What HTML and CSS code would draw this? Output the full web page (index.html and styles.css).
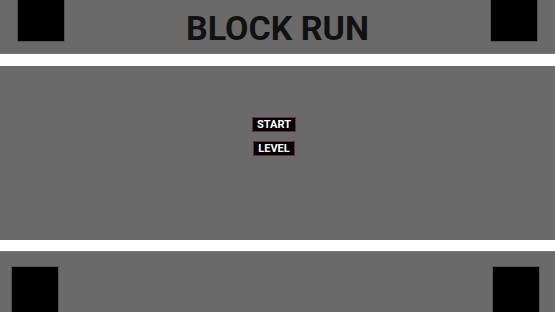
FILE: index.html
```html
<!DOCTYPE html>
<html lang="en">
<head>
    <meta charset="UTF-8">
    <meta name="viewport" content="width=device-width, initial-scale=1.0">
    <title>Block Run</title>
    <link rel="stylesheet" href="styles.css">
</head>
<body>
    <div class="top">
        <div class="block"></div>
        <h1 class="title">BLOCK RUN</h1>
        <div class="block"></div>
    </div>
    <div class="band"></div>
    <div class="middle">
        <button type="button" class="menu-btn">START</button>
        <button type="button" class="menu-btn">LEVEL</button>
    </div>
    <div class="band band-low"></div>
    <div class="bottom">
        <div class="block block-low"></div>
        <div class="block block-low"></div>
    </div>
</body>
</html>
```

FILE: styles.css
```css
body {
    margin: 0;
    height: 312px;
    overflow: hidden;
    background: #6a6a6a;
    font-family: Roboto, "Liberation Sans", sans-serif;
}
.top {
    height: 53px;
    display: flex;
    align-items: flex-start;
    padding: 0 18px;
}
.block {
    width: 46px;
    height: 41px;
    background: #000;
    box-shadow: 0 0 0 1px #555;
}
.title {
    flex: 1;
    margin: 11px 0 0;
    text-align: center;
    font-size: 34px;
    line-height: 34px;
    font-weight: bold;
    color: #111;
}
.band {
    height: 13px;
    background: #fff;
    border-top: 1px solid #7a7a7a;
    box-sizing: border-box;
}
.band-low {
    height: 12px;
    border-top: none;
    border-bottom: 1px solid #7a7a7a;
}
.middle {
    height: 174px;
    display: flex;
    flex-direction: column;
    align-items: center;
    gap: 9px;
    padding: 51px 7px 0 0;
    box-sizing: border-box;
}
.menu-btn {
    height: 15px;
    padding: 0 4px;
    background: #000;
    color: #fff;
    border: 1px solid #6e2a3a;
    font-family: Roboto, "Liberation Sans", sans-serif;
    font-size: 11px;
    font-weight: bold;
    line-height: 13px;
}
.bottom {
    height: 60px;
    display: flex;
    justify-content: space-between;
    align-items: flex-end;
    padding: 0 16px 0 12px;
}
.block-low {
    height: 45px;
}
```
